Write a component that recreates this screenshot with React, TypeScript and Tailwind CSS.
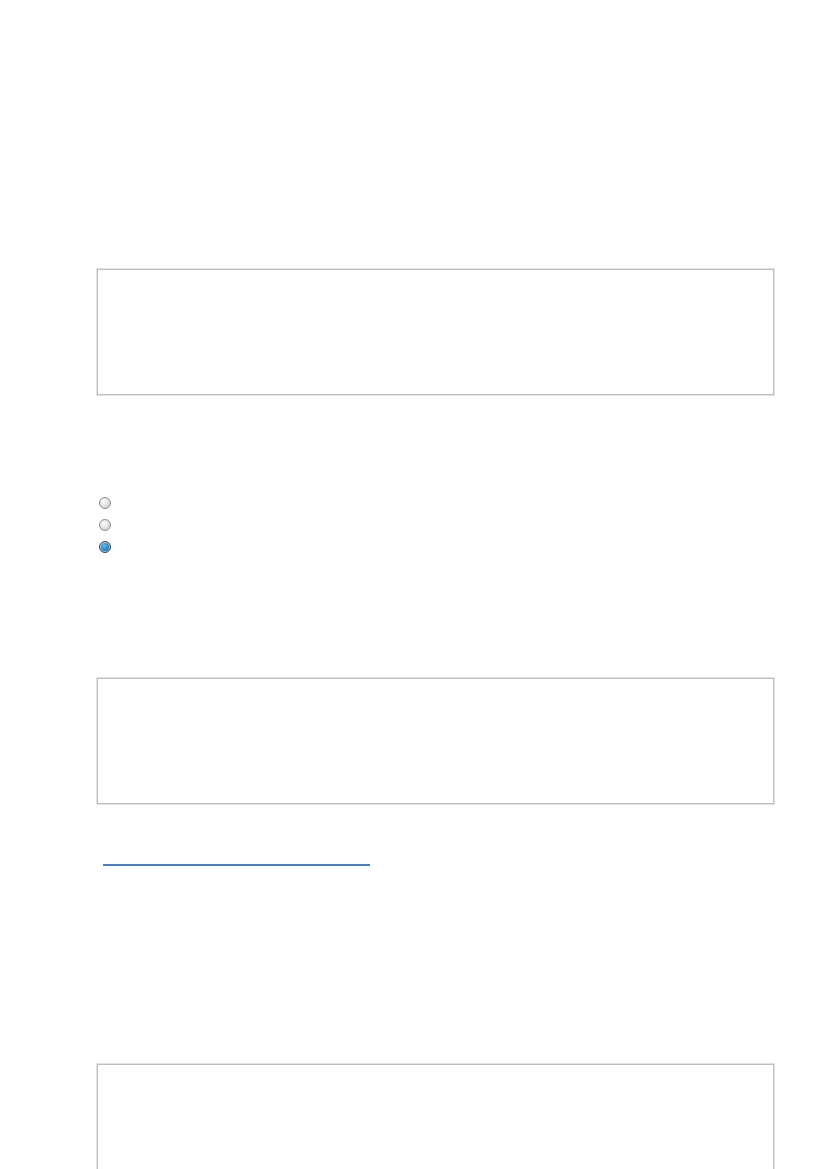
import React from 'react';

const Box: React.FC<{ className?: string }> = ({ className = '' }) => (
  <div
    className={`w-[677px] border border-[#bfbfbf] ring-1 ring-[#e3e3e3] bg-white ${className}`}
  />
);

const Radio: React.FC<{ checked?: boolean }> = ({ checked }) =>
  checked ? (
    <span className="flex h-[12px] w-[12px] items-center justify-center rounded-full border border-[#23425f] bg-[radial-gradient(circle_at_40%_35%,#dfeaf3,#8eaac2)]">
      <span className="h-[8px] w-[8px] rounded-full bg-[radial-gradient(circle_at_40%_35%,#58bdf0,#0b5f9e)]" />
    </span>
  ) : (
    <span className="h-[12px] w-[12px] rounded-full border border-[#8f8f8f] bg-[radial-gradient(circle_at_40%_35%,#ffffff,#c4c4c4)]" />
  );

export default function App() {
  return (
    <div
      className="min-h-[1169px] w-[827px] overflow-hidden bg-white pl-[97px] text-[13px] text-white"
      style={{ fontFamily: '"Liberation Sans", Arial, sans-serif' }}
    >
      <div className="flex flex-col">
        <Box className="mt-[269px] h-[126px]" />

        <div className="mt-[102px] flex flex-col gap-[10px] pl-[2px]">
          <Radio />
          <Radio />
          <Radio checked />
        </div>

        <Box className="mt-[125px] h-[126px]" />

        <a
          href="#"
          className="mt-[51px] ml-[6px] block h-[11px] w-[267px] border-b-2 border-[#4d7fbf]"
        />

        <Box className="mt-[198px] h-[120px]" />
      </div>
    </div>
  );
}
